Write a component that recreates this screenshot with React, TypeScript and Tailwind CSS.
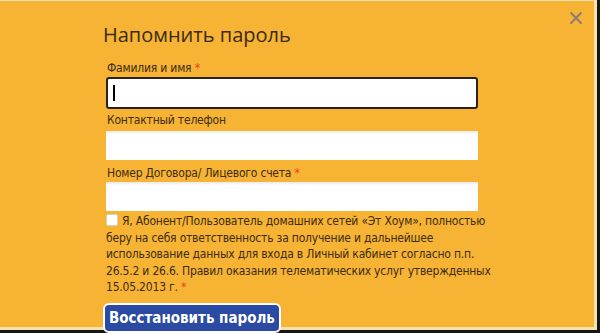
import React from "react";

const FONT = { fontFamily: '"DejaVu Sans Condensed", "Liberation Sans", sans-serif' };

function Label({ text, required }: { text: string; required?: boolean }) {
  return (
    <div className="text-[12px] leading-[14px] text-[#3b2c12] tracking-[-0.2px] pl-px" style={FONT}>
      {text}
      {required && <span className="text-[#e8461e]"> *</span>}
    </div>
  );
}

export default function App() {
  return (
    <div className="w-[600px] h-[333px] bg-[#161616] overflow-hidden">
      <div className="relative w-[597px] h-[330px] bg-[#f7b333] border-t border-r-[3px] border-b-[3px] border-[#f6e2b0]">
        {/* close */}
        <button className="absolute right-[11px] top-[10px] text-[#8a8070]">
          <svg width="14" height="14" viewBox="0 0 14 14">
            <path d="M2 2L12 12M12 2L2 12" stroke="currentColor" strokeWidth="2" strokeLinecap="round" />
          </svg>
        </button>

        <div className="pl-[103px] pt-[20px]">
          <h1
            className="text-[20px] leading-[28px] text-[#3a2a12] font-normal"
            style={{ fontFamily: '"Open Sans", sans-serif' }}
          >
            Напомнить пароль
          </h1>

          <div className="ml-[3px] w-[372px] mt-[12px] flex flex-col">
            <Label text="Фамилия и имя" required />
            <div className="relative mt-[2px] h-[32px] bg-white border-2 border-[#2b2217] rounded-[3px]">
              <span className="absolute left-[5px] top-[6px] w-[2px] h-[16px] bg-black" />
            </div>

            <div className="mt-[4px]">
              <Label text="Контактный телефон" />
            </div>
            <div className="mt-[4px] h-[29px] bg-white shadow-[inset_0_2px_2px_rgba(0,0,0,0.08)]" />

            <div className="mt-[6px]">
              <Label text="Номер Договора/ Лицевого счета" required />
            </div>
            <div className="mt-[2px] h-[29px] bg-white shadow-[inset_0_2px_2px_rgba(0,0,0,0.08)]" />

            <p
              className="mt-[2px] w-[390px] whitespace-nowrap text-[12px] leading-[16.5px] text-[#3b2c12] tracking-[-0.2px]"
              style={FONT}
            >
              <span className="inline-block align-[-1px] w-[12px] h-[12px] bg-white rounded-[2px] border border-[#d8d0c0] mr-[4px]" />
              Я, Абонент/Пользователь домашних сетей «Эт Хоум», полностью
              <br />
              беру на себя ответственность за получение и дальнейшее
              <br />
              использование данных для входа в Личный кабинет согласно п.п.
              <br />
              26.5.2 и 26.6. Правил оказания телематических услуг утвержденных
              <br />
              15.05.2013 г. <span className="text-[#e8461e]">*</span>
            </p>
          </div>

          <button
            className="mt-[7px] h-[30px] px-[4px] bg-[#2a4aa3] text-white font-bold text-[15px] leading-[16px] rounded-[6px] border-2 border-white"
            style={FONT}
          >
            Восстановить пароль
          </button>
        </div>
      </div>
    </div>
  );
}
